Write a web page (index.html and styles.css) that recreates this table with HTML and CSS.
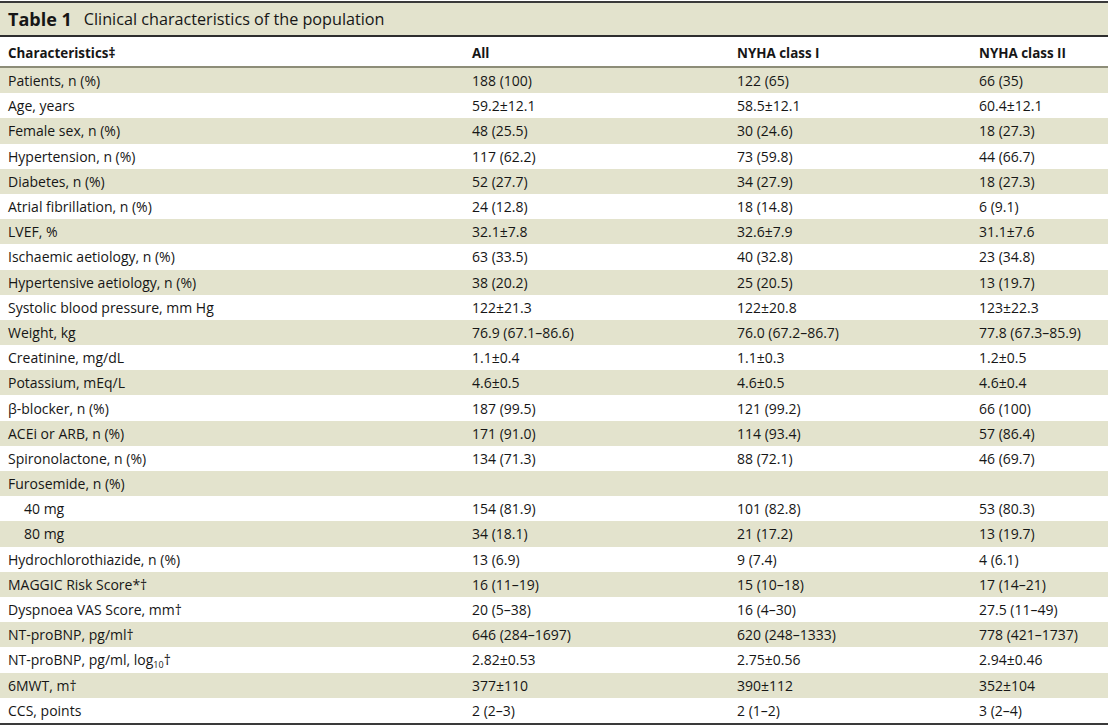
FILE: index.html
```html
<!DOCTYPE html>
<html>
<head>
<meta charset="utf-8">
<link rel="stylesheet" href="styles.css">
</head>
<body>
<div class="wrap">
  <div class="title"><span class="tnum">Table 1</span><span class="tname">Clinical characteristics of the population</span></div>
  <table class="tbl">
    <colgroup><col class="c1"><col class="c2"><col class="c3"><col class="c4"></colgroup>
    <thead>
      <tr><th>Characteristics‡</th><th>All</th><th>NYHA class I</th><th>NYHA class II</th></tr>
    </thead>
    <tbody>
      <tr><td>Patients, n (%)</td><td>188 (100)</td><td>122 (65)</td><td>66 (35)</td></tr>
      <tr><td>Age, years</td><td>59.2±12.1</td><td>58.5±12.1</td><td>60.4±12.1</td></tr>
      <tr><td>Female sex, n (%)</td><td>48 (25.5)</td><td>30 (24.6)</td><td>18 (27.3)</td></tr>
      <tr><td>Hypertension, n (%)</td><td>117 (62.2)</td><td>73 (59.8)</td><td>44 (66.7)</td></tr>
      <tr><td>Diabetes, n (%)</td><td>52 (27.7)</td><td>34 (27.9)</td><td>18 (27.3)</td></tr>
      <tr><td>Atrial fibrillation, n (%)</td><td>24 (12.8)</td><td>18 (14.8)</td><td>6 (9.1)</td></tr>
      <tr><td>LVEF, %</td><td>32.1±7.8</td><td>32.6±7.9</td><td>31.1±7.6</td></tr>
      <tr><td>Ischaemic aetiology, n (%)</td><td>63 (33.5)</td><td>40 (32.8)</td><td>23 (34.8)</td></tr>
      <tr><td>Hypertensive aetiology, n (%)</td><td>38 (20.2)</td><td>25 (20.5)</td><td>13 (19.7)</td></tr>
      <tr><td>Systolic blood pressure, mm Hg</td><td>122±21.3</td><td>122±20.8</td><td>123±22.3</td></tr>
      <tr><td>Weight, kg</td><td>76.9 (67.1–86.6)</td><td>76.0 (67.2–86.7)</td><td>77.8 (67.3–85.9)</td></tr>
      <tr><td>Creatinine, mg/dL</td><td>1.1±0.4</td><td>1.1±0.3</td><td>1.2±0.5</td></tr>
      <tr><td>Potassium, mEq/L</td><td>4.6±0.5</td><td>4.6±0.5</td><td>4.6±0.4</td></tr>
      <tr><td>β-blocker, n (%)</td><td>187 (99.5)</td><td>121 (99.2)</td><td>66 (100)</td></tr>
      <tr><td>ACEi or ARB, n (%)</td><td>171 (91.0)</td><td>114 (93.4)</td><td>57 (86.4)</td></tr>
      <tr><td>Spironolactone, n (%)</td><td>134 (71.3)</td><td>88 (72.1)</td><td>46 (69.7)</td></tr>
      <tr><td>Furosemide, n (%)</td><td></td><td></td><td></td></tr>
      <tr><td class="ind">40 mg</td><td>154 (81.9)</td><td>101 (82.8)</td><td>53 (80.3)</td></tr>
      <tr><td class="ind">80 mg</td><td>34 (18.1)</td><td>21 (17.2)</td><td>13 (19.7)</td></tr>
      <tr><td>Hydrochlorothiazide, n (%)</td><td>13 (6.9)</td><td>9 (7.4)</td><td>4 (6.1)</td></tr>
      <tr><td>MAGGIC Risk Score*†</td><td>16 (11–19)</td><td>15 (10–18)</td><td>17 (14–21)</td></tr>
      <tr><td>Dyspnoea VAS Score, mm†</td><td>20 (5–38)</td><td>16 (4–30)</td><td>27.5 (11–49)</td></tr>
      <tr><td>NT-proBNP, pg/ml†</td><td>646 (284–1697)</td><td>620 (248–1333)</td><td>778 (421–1737)</td></tr>
      <tr><td>NT-proBNP, pg/ml, log<sub>10</sub>†</td><td>2.82±0.53</td><td>2.75±0.56</td><td>2.94±0.46</td></tr>
      <tr><td>6MWT, m†</td><td>377±110</td><td>390±112</td><td>352±104</td></tr>
      <tr><td>CCS, points</td><td>2 (2–3)</td><td>2 (1–2)</td><td>3 (2–4)</td></tr>
    </tbody>
  </table>
</div>
</body>
</html>
```
FILE: styles.css
```css
html, body {
  margin: 0;
  padding: 0;
  background: #ffffff;
}
body {
  font-family: "Open Sans", "Noto Sans", sans-serif;
  color: #161616;
}
.wrap {
  width: 1108px;
  padding-top: 1px;
}
.title {
  background: #e3e3cd;
  border-top: 2px solid #3a3a3a;
  border-bottom: 2px solid #2e2e2e;
  display: flex;
  align-items: center;
  padding-left: 8px;
  box-sizing: border-box;
  height: 36px;
}
.tnum {
  font-weight: 700;
  font-size: 18px;
  margin-right: 12px;
}
.tname {
  font-size: 16.2px;
}
.tbl {
  width: 1108px;
  border-collapse: collapse;
  table-layout: fixed;
  font-size: 14px;
}
.c1 { width: 464px; }
.c2 { width: 265px; }
.c3 { width: 242px; }
.c4 { width: 137px; }
.tbl th {
  text-align: left;
  font-weight: 700;
  font-size: 13.4px;
  height: 27px;
  padding: 2px 0 0 8px;
  box-sizing: content-box;
  border-bottom: 2px solid #8d8d78;
  vertical-align: middle;
}
.tbl td {
  height: 24.2px;
  padding: 1px 0 0 8px;
  box-sizing: content-box;
  vertical-align: middle;
  white-space: nowrap;
  line-height: 16px;
}
.tbl tbody tr:nth-child(odd) td {
  background: #e3e3cd;
}
.tbl tbody tr:last-child td {
  border-bottom: 2px solid #3a3a3a;
}
.tbl td.ind {
  padding-left: 24px;
}
.tbl sub {
  font-size: 9px;
  line-height: 0;
  vertical-align: -3px;
}
```
